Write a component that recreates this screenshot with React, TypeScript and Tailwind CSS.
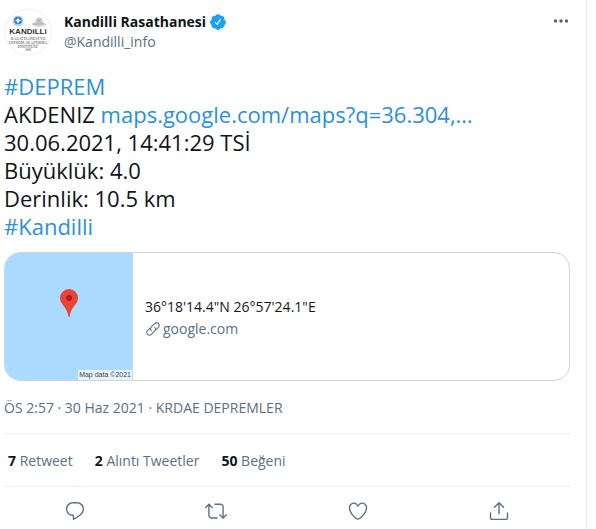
import type { ReactNode } from 'react';

interface Stat {
  count: number;
  label: string;
}

interface Action {
  name: string;
  paths: string[];
}

const stats: Stat[] = [
  { count: 7, label: 'Retweet' },
  { count: 2, label: 'Alıntı Tweetler' },
  { count: 50, label: 'Beğeni' },
];

const actions: Action[] = [
  {
    name: 'Yanıtla',
    paths: [
      'M14.046 2.242l-4.148-.01h-.002c-4.374 0-7.8 3.427-7.8 7.802 0 4.098 3.186 7.206 7.465 7.37v3.828c0 .108.044.286.12.403.142.225.384.347.632.347.138 0 .277-.038.402-.118.264-.168 6.473-4.14 8.088-5.506 1.902-1.61 3.04-3.97 3.043-6.312v-.017c-.006-4.367-3.43-7.787-7.8-7.788zm3.787 12.972c-1.134.96-4.862 3.405-6.772 4.643V16.67c0-.414-.335-.75-.75-.75h-.396c-3.66 0-6.318-2.476-6.318-5.886 0-3.534 2.768-6.302 6.3-6.302l4.147.01h.002c3.532 0 6.3 2.766 6.302 6.296-.003 1.91-.942 3.844-2.514 5.176z',
    ],
  },
  {
    name: 'Retweetle',
    paths: [
      'M23.77 15.67c-.292-.293-.767-.293-1.06 0l-2.22 2.22V7.65c0-2.068-1.683-3.75-3.75-3.75h-5.85c-.414 0-.75.336-.75.75s.336.75.75.75h5.85c1.24 0 2.25 1.01 2.25 2.25v10.24l-2.22-2.22c-.293-.293-.768-.293-1.06 0s-.294.768 0 1.06l3.5 3.5c.145.147.337.22.53.22s.383-.072.53-.22l3.5-3.5c.294-.292.294-.767 0-1.06zm-10.66 3.28H7.26c-1.24 0-2.25-1.01-2.25-2.25V6.46l2.22 2.22c.148.147.34.22.532.22s.384-.073.53-.22c.293-.293.293-.768 0-1.06l-3.5-3.5c-.293-.294-.768-.294-1.06 0l-3.5 3.5c-.294.292-.294.767 0 1.06s.767.293 1.06 0l2.22-2.22V16.7c0 2.068 1.683 3.75 3.75 3.75h5.85c.414 0 .75-.336.75-.75s-.337-.75-.75-.75z',
    ],
  },
  {
    name: 'Beğen',
    paths: [
      'M12 21.638h-.014C9.403 21.59 1.95 14.856 1.95 8.478c0-3.064 2.525-5.754 5.403-5.754 2.29 0 3.83 1.58 4.646 2.73.814-1.148 2.354-2.73 4.645-2.73 2.88 0 5.404 2.69 5.404 5.755 0 6.376-7.454 13.11-10.037 13.157H12zM7.354 4.225c-2.08 0-3.903 1.988-3.903 4.255 0 5.74 7.034 11.596 8.55 11.658 1.518-.062 8.55-5.917 8.55-11.658 0-2.267-1.823-4.255-3.903-4.255-2.528 0-3.94 2.936-3.952 2.965-.23.562-1.156.562-1.387 0-.014-.03-1.425-2.965-3.954-2.965z',
    ],
  },
  {
    name: 'Paylaş',
    paths: [
      'M17.53 7.47l-5-5c-.293-.293-.768-.293-1.06 0l-5 5c-.294.293-.294.768 0 1.06s.767.294 1.06 0l3.72-3.72V15c0 .414.336.75.75.75s.75-.336.75-.75V4.81l3.72 3.72c.146.147.338.22.53.22s.384-.072.53-.22c.293-.293.293-.767 0-1.06z',
      'M19.708 21.944H4.292C3.028 21.944 2 20.916 2 19.652V14c0-.414.336-.75.75-.75s.75.336.75.75v5.652c0 .437.355.792.792.792h15.416c.437 0 .792-.355.792-.792V14c0-.414.336-.75.75-.75s.75.336.75.75v5.652c0 1.264-1.028 2.292-2.292 2.292z',
    ],
  },
];

function Avatar() {
  return (
    <svg viewBox="0 0 48 48" className="h-12 w-12 shrink-0" role="img" aria-label="Kandilli Rasathanesi">
      <circle cx="24" cy="24" r="23" fill="#fff" stroke="#eff1f2" />
      {/* Observatory seal */}
      <circle cx="14" cy="13" r="5.5" fill="#b9d9ee" />
      <circle cx="14" cy="12.5" r="3.8" fill="#2f7fb8" />
      <path d="M14 9.5l1 2 2 1-2 1-1 2.5-1-2.5-2-1 2-1z" fill="#fff" />
      {/* Dome */}
      <path d="M27 16l4-2 1-3 3-2 3 2 1 3 4 3-5 1-3 1-4-1z" fill="#cfd1d2" />
      <path d="M29 16h11M33 11l5 5M37 10l-5 7" stroke="#9b9ea0" strokeWidth=".6" />
      <g fontFamily="Liberation Sans, sans-serif" textAnchor="middle" fill="#303234">
        <text x="24" y="26" fontSize="8" fontWeight="700">KANDiLLi</text>
        <g fontFamily="Liberation Serif, serif" fill="#45484a">
          <text x="24" y="31.5" fontSize="4.2">RASATHANESİ VE</text>
          <text x="24" y="35.5" fontSize="3.8">DEPREM ARAŞTIRMA</text>
          <text x="24" y="39.5" fontSize="3.8">ENSTİTÜSÜ</text>
          <text x="24" y="43" fontSize="3">1868</text>
        </g>
      </g>
    </svg>
  );
}

function VerifiedBadge() {
  return (
    <svg viewBox="0 0 24 24" className="h-[18px] w-[18px] shrink-0 fill-[#1da1f2]" role="img" aria-label="Onaylanmış hesap">
      <path d="M22.5 12.5c0-1.58-.875-2.95-2.148-3.6.154-.435.238-.905.238-1.4 0-2.21-1.71-3.998-3.818-3.998-.47 0-.92.084-1.336.25C14.818 2.415 13.51 1.5 12 1.5s-2.816.917-3.437 2.25c-.415-.165-.866-.25-1.336-.25-2.11 0-3.818 1.79-3.818 4 0 .494.083.964.237 1.4-1.272.65-2.147 2.018-2.147 3.6 0 1.495.782 2.798 1.942 3.486-.02.17-.032.34-.032.514 0 2.21 1.708 4 3.818 4 .47 0 .92-.086 1.335-.25.62 1.334 1.926 2.25 3.437 2.25 1.512 0 2.818-.916 3.437-2.25.415.163.865.248 1.336.248 2.11 0 3.818-1.79 3.818-4 0-.174-.012-.344-.033-.513 1.158-.687 1.943-1.99 1.943-3.484zm-6.616-3.334l-4.334 6.5c-.145.217-.382.334-.625.334-.143 0-.288-.04-.416-.126l-.115-.094-2.415-2.415c-.293-.293-.293-.768 0-1.06s.768-.294 1.06 0l1.77 1.767 3.825-5.74c.23-.345.696-.436 1.04-.207.346.23.44.696.21 1.04z" />
    </svg>
  );
}

function TextLink({ children }: { children: ReactNode }) {
  return (
    <a href="#" className="text-[#2b91d6] hover:underline">
      {children}
    </a>
  );
}

function LocationCard() {
  return (
    <a href="#" className="mt-3 flex overflow-hidden rounded-2xl border border-[#cfd4d8] hover:bg-gray-50">
      <div className="relative flex h-[127px] w-32 shrink-0 justify-center border-r border-[#cfd4d8] bg-[#aadaff] pt-9">
        <svg viewBox="0 0 18 28" className="h-7 w-[18px]">
          <path d="M9 0a9 9 0 0 0-9 9c0 6.500 7.500 9 8.500 19h1C10.500 18 18 15.500 18 9a9 9 0 0 0-9-9z" fill="#ea4335" />
          <circle cx="9" cy="9" r="3" fill="#a8211b" />
        </svg>
        <span className="absolute right-0 bottom-0 bg-white/70 px-px font-['Liberation_Sans',sans-serif] text-[7px] leading-[10px] text-[#444]">
          Map data ©2021
        </span>
      </div>
      <div className="flex flex-col justify-center px-3 pt-0.5 text-sm leading-[22px]">
        <span className="text-[#14171a]">36°18'14.4"N 26°57'24.1"E</span>
        <span className="flex items-center gap-0.5 text-[#5b7083]">
          <svg viewBox="0 0 24 24" className="h-4 w-4 fill-none stroke-current" strokeWidth="1.6" strokeLinecap="round">
            <path d="M9.500 14.500c-1.600-1.600-1.600-4 0-5.600l5-5c1.600-1.600 4-1.600 5.600 0s1.600 4 0 5.600l-3.300 3.300" />
            <path d="M14.500 9.500c1.600 1.600 1.600 4 0 5.600l-5 5c-1.600 1.600-4 1.600-5.600 0s-1.600-4 0-5.600l3.300-3.300" />
          </svg>
          google.com
        </span>
      </div>
    </a>
  );
}

export default function App() {
  return (
    <main className="bg-white pr-[9px] font-['Open_Sans',sans-serif] text-[#0f1419]">
      <article className="min-h-screen border-r border-[#ebeef0] pt-2 pr-4 pl-1">
        <header className="flex items-start gap-3">
          <Avatar />
          <div className="min-w-0 flex-1 pt-1 text-sm leading-5">
            <div className="flex items-center gap-[3px]">
              <a href="#" className="font-bold hover:underline">Kandilli Rasathanesi</a>
              <VerifiedBadge />
            </div>
            <span className="block text-[#5b7083]">@Kandilli_info</span>
          </div>
          <button type="button" aria-label="Daha fazla" className="pt-1 text-[#536471]">
            <svg viewBox="0 0 18 18" className="h-[18px] w-[18px] fill-current">
              <circle cx="3.500" cy="9" r="1.700" />
              <circle cx="9" cy="9" r="1.700" />
              <circle cx="14.500" cy="9" r="1.700" />
            </svg>
          </button>
        </header>

        <div className="mt-4 text-[22px] leading-7">
          <p><TextLink>#DEPREM</TextLink></p>
          <p>AKDENIZ <TextLink>maps.google.com/maps?q=36.304,…</TextLink></p>
          <p>30.06.2021, 14:41:29 TSİ</p>
          <p>Büyüklük: 4.0</p>
          <p>Derinlik: 10.5 km</p>
          <p><TextLink>#Kandilli</TextLink></p>
        </div>

        <LocationCard />

        <p className="pt-[17px] pb-[15px] text-sm leading-5 text-[#5b7083]">
          <a href="#" className="hover:underline">ÖS 2:57 · 30 Haz 2021</a> ·{' '}
          <a href="#" className="hover:underline">KRDAE DEPREMLER</a>
        </p>

        <div className="flex gap-[22px] border-y border-[#ebeef0] px-1 pt-[17px] pb-[15px] text-sm leading-5">
          {stats.map((stat) => (
            <a href="#" key={stat.label} className="text-[#5b7083] hover:underline">
              <span className="font-bold text-[#0f1419]">{stat.count}</span> {stat.label}
            </a>
          ))}
        </div>

        <div className="grid h-12 grid-cols-4 items-center justify-items-center">
          {actions.map((action) => (
            <button type="button" key={action.name} aria-label={action.name} className="text-[#5b7083]">
              <svg viewBox="0 0 24 24" className="h-[22px] w-[22px] fill-current">
                {action.paths.map((d) => (
                  <path key={d} d={d} />
                ))}
              </svg>
            </button>
          ))}
        </div>
      </article>
    </main>
  );
}
